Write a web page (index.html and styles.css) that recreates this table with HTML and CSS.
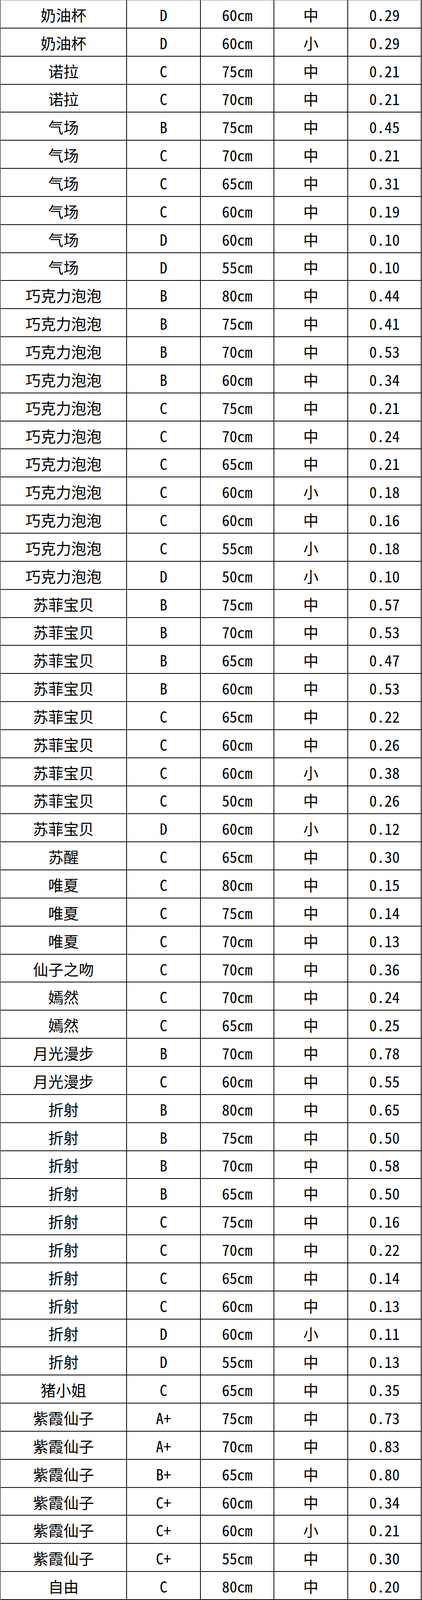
FILE: index.html
```html
<!DOCTYPE html>
<html lang="zh-CN">
<head>
<meta charset="utf-8">
<title>表格</title>
<link rel="stylesheet" href="styles.css">
</head>
<body>
<div class="sheet">
<div class="c">奶油杯</div><div class="c">D</div><div class="c">60cm</div><div class="c">中</div><div class="c">0.29</div>
<div class="c">奶油杯</div><div class="c">D</div><div class="c">60cm</div><div class="c">小</div><div class="c">0.29</div>
<div class="c">诺拉</div><div class="c">C</div><div class="c">75cm</div><div class="c">中</div><div class="c">0.21</div>
<div class="c">诺拉</div><div class="c">C</div><div class="c">70cm</div><div class="c">中</div><div class="c">0.21</div>
<div class="c">气场</div><div class="c">B</div><div class="c">75cm</div><div class="c">中</div><div class="c">0.45</div>
<div class="c">气场</div><div class="c">C</div><div class="c">70cm</div><div class="c">中</div><div class="c">0.21</div>
<div class="c">气场</div><div class="c">C</div><div class="c">65cm</div><div class="c">中</div><div class="c">0.31</div>
<div class="c">气场</div><div class="c">C</div><div class="c">60cm</div><div class="c">中</div><div class="c">0.19</div>
<div class="c">气场</div><div class="c">D</div><div class="c">60cm</div><div class="c">中</div><div class="c">0.10</div>
<div class="c">气场</div><div class="c">D</div><div class="c">55cm</div><div class="c">中</div><div class="c">0.10</div>
<div class="c">巧克力泡泡</div><div class="c">B</div><div class="c">80cm</div><div class="c">中</div><div class="c">0.44</div>
<div class="c">巧克力泡泡</div><div class="c">B</div><div class="c">75cm</div><div class="c">中</div><div class="c">0.41</div>
<div class="c">巧克力泡泡</div><div class="c">B</div><div class="c">70cm</div><div class="c">中</div><div class="c">0.53</div>
<div class="c">巧克力泡泡</div><div class="c">B</div><div class="c">60cm</div><div class="c">中</div><div class="c">0.34</div>
<div class="c">巧克力泡泡</div><div class="c">C</div><div class="c">75cm</div><div class="c">中</div><div class="c">0.21</div>
<div class="c">巧克力泡泡</div><div class="c">C</div><div class="c">70cm</div><div class="c">中</div><div class="c">0.24</div>
<div class="c">巧克力泡泡</div><div class="c">C</div><div class="c">65cm</div><div class="c">中</div><div class="c">0.21</div>
<div class="c">巧克力泡泡</div><div class="c">C</div><div class="c">60cm</div><div class="c">小</div><div class="c">0.18</div>
<div class="c">巧克力泡泡</div><div class="c">C</div><div class="c">60cm</div><div class="c">中</div><div class="c">0.16</div>
<div class="c">巧克力泡泡</div><div class="c">C</div><div class="c">55cm</div><div class="c">小</div><div class="c">0.18</div>
<div class="c">巧克力泡泡</div><div class="c">D</div><div class="c">50cm</div><div class="c">小</div><div class="c">0.10</div>
<div class="c">苏菲宝贝</div><div class="c">B</div><div class="c">75cm</div><div class="c">中</div><div class="c">0.57</div>
<div class="c">苏菲宝贝</div><div class="c">B</div><div class="c">70cm</div><div class="c">中</div><div class="c">0.53</div>
<div class="c">苏菲宝贝</div><div class="c">B</div><div class="c">65cm</div><div class="c">中</div><div class="c">0.47</div>
<div class="c">苏菲宝贝</div><div class="c">B</div><div class="c">60cm</div><div class="c">中</div><div class="c">0.53</div>
<div class="c">苏菲宝贝</div><div class="c">C</div><div class="c">65cm</div><div class="c">中</div><div class="c">0.22</div>
<div class="c">苏菲宝贝</div><div class="c">C</div><div class="c">60cm</div><div class="c">中</div><div class="c">0.26</div>
<div class="c">苏菲宝贝</div><div class="c">C</div><div class="c">60cm</div><div class="c">小</div><div class="c">0.38</div>
<div class="c">苏菲宝贝</div><div class="c">C</div><div class="c">50cm</div><div class="c">中</div><div class="c">0.26</div>
<div class="c">苏菲宝贝</div><div class="c">D</div><div class="c">60cm</div><div class="c">小</div><div class="c">0.12</div>
<div class="c">苏醒</div><div class="c">C</div><div class="c">65cm</div><div class="c">中</div><div class="c">0.30</div>
<div class="c">唯夏</div><div class="c">C</div><div class="c">80cm</div><div class="c">中</div><div class="c">0.15</div>
<div class="c">唯夏</div><div class="c">C</div><div class="c">75cm</div><div class="c">中</div><div class="c">0.14</div>
<div class="c">唯夏</div><div class="c">C</div><div class="c">70cm</div><div class="c">中</div><div class="c">0.13</div>
<div class="c">仙子之吻</div><div class="c">C</div><div class="c">70cm</div><div class="c">中</div><div class="c">0.36</div>
<div class="c">嫣然</div><div class="c">C</div><div class="c">70cm</div><div class="c">中</div><div class="c">0.24</div>
<div class="c">嫣然</div><div class="c">C</div><div class="c">65cm</div><div class="c">中</div><div class="c">0.25</div>
<div class="c">月光漫步</div><div class="c">B</div><div class="c">70cm</div><div class="c">中</div><div class="c">0.78</div>
<div class="c">月光漫步</div><div class="c">C</div><div class="c">60cm</div><div class="c">中</div><div class="c">0.55</div>
<div class="c">折射</div><div class="c">B</div><div class="c">80cm</div><div class="c">中</div><div class="c">0.65</div>
<div class="c">折射</div><div class="c">B</div><div class="c">75cm</div><div class="c">中</div><div class="c">0.50</div>
<div class="c">折射</div><div class="c">B</div><div class="c">70cm</div><div class="c">中</div><div class="c">0.58</div>
<div class="c">折射</div><div class="c">B</div><div class="c">65cm</div><div class="c">中</div><div class="c">0.50</div>
<div class="c">折射</div><div class="c">C</div><div class="c">75cm</div><div class="c">中</div><div class="c">0.16</div>
<div class="c">折射</div><div class="c">C</div><div class="c">70cm</div><div class="c">中</div><div class="c">0.22</div>
<div class="c">折射</div><div class="c">C</div><div class="c">65cm</div><div class="c">中</div><div class="c">0.14</div>
<div class="c">折射</div><div class="c">C</div><div class="c">60cm</div><div class="c">中</div><div class="c">0.13</div>
<div class="c">折射</div><div class="c">D</div><div class="c">60cm</div><div class="c">小</div><div class="c">0.11</div>
<div class="c">折射</div><div class="c">D</div><div class="c">55cm</div><div class="c">中</div><div class="c">0.13</div>
<div class="c">猪小姐</div><div class="c">C</div><div class="c">65cm</div><div class="c">中</div><div class="c">0.35</div>
<div class="c">紫霞仙子</div><div class="c">A+</div><div class="c">75cm</div><div class="c">中</div><div class="c">0.73</div>
<div class="c">紫霞仙子</div><div class="c">A+</div><div class="c">70cm</div><div class="c">中</div><div class="c">0.83</div>
<div class="c">紫霞仙子</div><div class="c">B+</div><div class="c">65cm</div><div class="c">中</div><div class="c">0.80</div>
<div class="c">紫霞仙子</div><div class="c">C+</div><div class="c">60cm</div><div class="c">中</div><div class="c">0.34</div>
<div class="c">紫霞仙子</div><div class="c">C+</div><div class="c">60cm</div><div class="c">小</div><div class="c">0.21</div>
<div class="c">紫霞仙子</div><div class="c">C+</div><div class="c">55cm</div><div class="c">中</div><div class="c">0.30</div>
<div class="c">自由</div><div class="c">C</div><div class="c">80cm</div><div class="c">中</div><div class="c">0.20</div>
</div>
</body>
</html>
```
FILE: styles.css
```css
html, body {
  margin: 0;
  padding: 0;
  background: #fff;
  height: 100%;
  overflow: hidden;
}
.sheet {
  box-sizing: border-box;
  width: 1080px;
  height: 100vh;
  border-top: 1px solid #8a8a8a;
  border-left: 2px solid #707070;
  display: grid;
  grid-template-columns: 323px 189px 188px 189px 188px;
  grid-template-rows: repeat(57, minmax(0, 1fr));
  font-family: "Noto Sans Mono CJK SC", "Noto Sans CJK SC", sans-serif;
  font-feature-settings: "hwid" 1;
  font-size: 39px;
  color: #000;
}
.c {
  box-sizing: border-box;
  border-right: 2px solid #000;
  border-bottom: 2px solid #000;
  display: flex;
  align-items: center;
  justify-content: center;
  line-height: 1;
  padding-top: 3px;
  white-space: nowrap;
  overflow: hidden;
}
```
